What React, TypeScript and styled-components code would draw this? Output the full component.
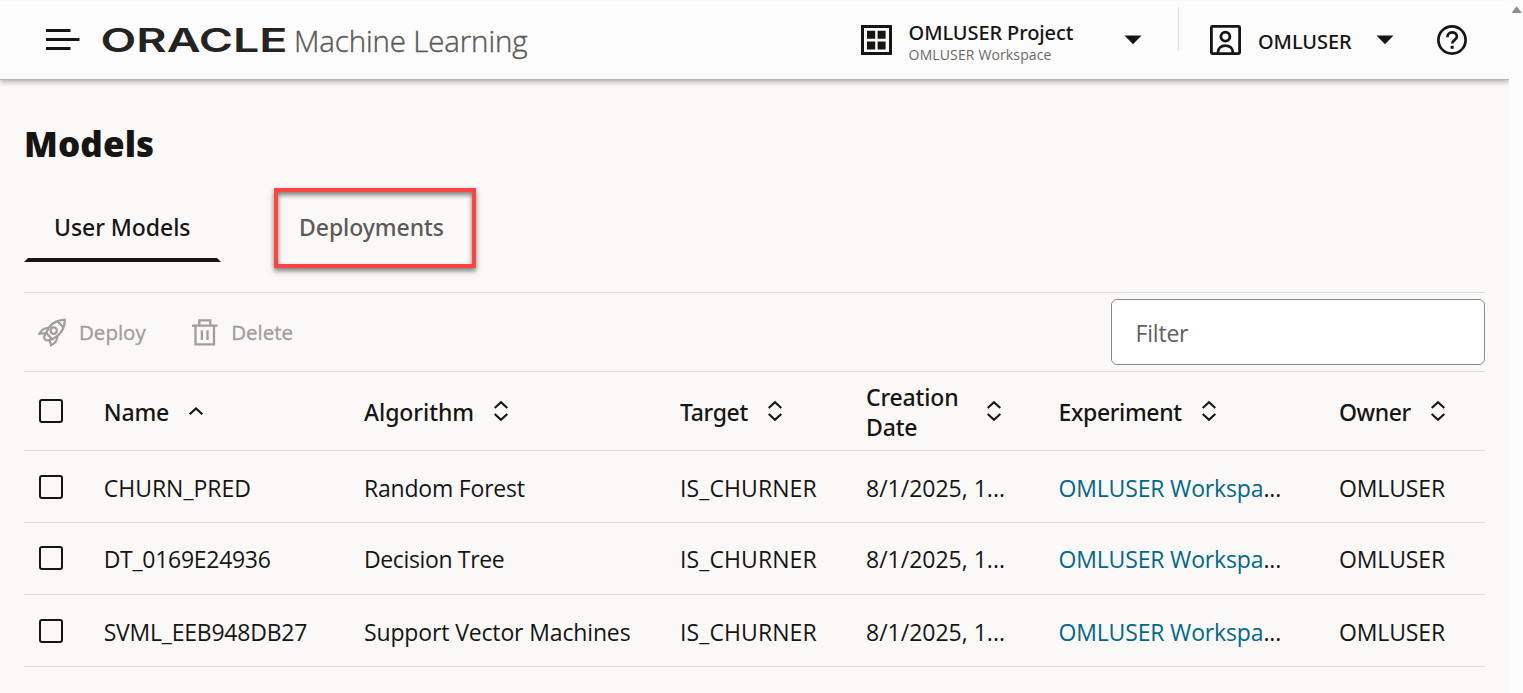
import React from 'react';
import styled, { createGlobalStyle } from 'styled-components';

const ink = '#161513';
const rule = '#dfdddb';

const GlobalStyle = createGlobalStyle`
  * { box-sizing: border-box; }
  body {
    margin: 0;
    background: #fbf9f8;
    color: ${ink};
    font-family: 'Open Sans', 'Noto Sans', sans-serif;
    overflow: hidden;
  }
`;

const Page = styled.div`
  display: flex;
  width: 100%;
  height: 693px;
`;

const Content = styled.div`
  flex: 1;
  min-width: 0;
`;

const ScrollTrack = styled.div`
  width: 14px;
  padding: 6px 0 0 3px;
  background: #fcfcfc;
  line-height: 0;
`;

const Header = styled.header`
  display: flex;
  align-items: center;
  height: 80px;
  padding: 0 42px 1px 46px;
  background: #fcfcfc;
  border-top: 1px solid #fff6f2;
  border-bottom: 1px solid #b1b3bf;
  box-shadow: 0 2px 5px rgba(0, 0, 0, 0.3);
  clip-path: inset(0 0 -12px 0);

  svg { flex: none; }
`;

const Logo = styled.svg`
  margin-left: 22px;
  overflow: visible;
`;

const Product = styled.span`
  margin: 2px 0 0 6px;
  font-size: 29.5px;
  font-weight: 300;
  line-height: 40px;
  letter-spacing: -0.15px;
  color: #5b5956;
  -webkit-text-stroke: 0.4px #5b5956;
  white-space: nowrap;
`;

const ProjectMenu = styled.div`
  display: flex;
  align-items: center;
  margin-left: auto;
`;

const ProjectText = styled.div`
  display: flex;
  flex-direction: column;
  gap: 1px;
  width: 165px;
  margin: 5px 50px 0 17px;
  white-space: nowrap;
`;

const ProjectName = styled.span`
  font: 500 20px/24px 'Noto Sans', sans-serif;
  letter-spacing: -0.1px;
`;

const WorkspaceName = styled.span`
  font-size: 14px;
  line-height: 18px;
  letter-spacing: 0.13px;
  color: #6b6966;
`;

const HeaderDivider = styled.div`
  width: 1px;
  height: 44px;
  margin: -22px 31px 0 36.4px;
  background: #dededd;
`;

const UserName = styled.span`
  width: 95px;
  margin: 4px 23px 0 17px;
  font: 500 20px/24px 'Noto Sans', sans-serif;
  letter-spacing: -0.07px;
`;

const HelpSlot = styled.div`
  margin-left: 43px;
  line-height: 0;
`;

const Main = styled.main`
  padding: 42px 24px 0;
`;

const Title = styled.h1`
  margin: 0;
  font: 900 35px/44px 'Noto Sans', sans-serif;
  letter-spacing: 0.1px;
`;

const Tabs = styled.nav`
  display: flex;
  align-items: flex-start;
  height: 104px;
  margin-top: 22px;
  gap: 53px;
`;

const Tab = styled.div<{ $selected?: boolean }>`
  display: flex;
  flex-direction: column;
  justify-content: space-between;
  width: ${(p) => (p.$selected ? '197px' : '202px')};
  height: ${(p) => (p.$selected ? '74px' : '80px')};
  color: ${(p) => (p.$selected ? ink : '#5c5a58')};
  font: 500 23px/30px 'Noto Sans', sans-serif;
  letter-spacing: -0.06px;
  padding-top: ${(p) => (p.$selected ? '24px' : '20px')};
  padding-left: ${(p) => (p.$selected ? '0' : '21px')};
`;

const HighlightedTab = styled(Tab)`
  border: 4px solid #ff4444;
  box-shadow: 0 3px 5px rgba(0, 0, 0, 0.5), inset 0 3px 5px rgba(0, 0, 0, 0.5);
`;

const TabLabel = styled.span`
  padding-left: 30px;
`;

const TabUnderline = styled.div`
  height: 4px;
  background: ${ink};
  clip-path: polygon(4px 0, calc(100% - 4px) 0, 100% 100%, 0 100%);
`;

const Toolbar = styled.div`
  display: flex;
  align-items: center;
  height: 80px;
  padding-left: 14px;
  border-top: 1px solid ${rule};
  border-bottom: 1px solid ${rule};
`;

const ToolButton = styled.div`
  display: flex;
  align-items: center;
  margin-right: 46px;
  color: #a09e9c;
  font-size: 20.5px;
  line-height: 28px;
`;

const ToolLabel = styled.span<{ $gap: number }>`
  margin: 0 0 0 ${(p) => p.$gap}px;
  -webkit-text-stroke: 0.35px currentColor;
`;

const Filter = styled.div`
  width: 374px;
  height: 66px;
  margin-left: auto;
  padding: 1px 0 0 23.6px;
  border: 1px solid #8b8987;
  border-radius: 6px;
  background: #fff;
  color: #625f5c;
  font-size: 23px;
  line-height: 64px;
  letter-spacing: -0.22px;
`;

const Row = styled.div<{ $head?: boolean }>`
  display: grid;
  grid-template-columns: 79.7px 260.3px 316px 186px 192.5px 280.5px 1fr;
  align-items: center;
  height: ${(p) => (p.$head ? '79px' : '72px')};
  border-bottom: 1px solid ${rule};
`;

const Cell = styled.div<{ $spacing?: number; $drop?: number }>`
  padding-top: ${(p) => p.$drop ?? 3}px;
  font-size: 23px;
  line-height: 30px;
  letter-spacing: ${(p) => p.$spacing ?? 0}px;
  white-space: nowrap;
`;

const ExperimentLink = styled.a`
  color: #00688c;
`;

const HeadCell = styled.div`
  display: flex;
  align-items: center;
`;

const HeadLabel = styled.span<{ $spacing?: number; $width: number }>`
  width: ${(p) => p.$width}px;
  margin-top: 2px;
  font: 500 23px/30px 'Noto Sans', sans-serif;
  letter-spacing: ${(p) => p.$spacing ?? 0}px;
`;

const CheckBox = styled.div<{ $raised?: boolean }>`
  width: 24px;
  height: 24px;
  margin: ${(p) => (p.$raised ? '-1px' : '1px')} 0 0 15px;
  border: 2px solid ${ink};
  border-radius: 3px;
`;

const Caret = () => (
  <svg width="18" height="10" viewBox="0 0 18 10">
    <path d="M0.5 0.5h17L9 9.3z" fill={ink} />
  </svg>
);

const SortIcon = ({ both }: { both?: boolean }) => (
  <svg width="16" height="22" viewBox="0 0 16 22" fill="none" stroke={ink} strokeWidth="2.1">
    {both ? <path d="M1.7 8.1L8 2.3l6.3 5.8M1.7 13.9L8 19.7l6.3-5.8" /> : <path d="M1.7 14.2L8 8.4l6.3 5.8" />}
  </svg>
);

const columns = [
  { label: 'Name', width: 84, spacing: -0.15, both: false },
  { label: 'Algorithm', width: 129, spacing: -0.05, both: true },
  { label: 'Target', width: 86.8, spacing: -0.35, both: true },
  { label: 'Creation Date', width: 119.8, spacing: -0.15, both: true },
  { label: 'Experiment', width: 142.6, spacing: -0.38, both: true },
  { label: 'Owner', width: 90.8, spacing: -0.4, both: true },
];

const models = [
  { name: 'CHURN_PRED', spacing: 0, algorithm: 'Random Forest', algoSpacing: -0.2, drop: 3 },
  { name: 'DT_0169E24936', spacing: -0.28, algorithm: 'Decision Tree', algoSpacing: -0.36, drop: 1 },
  { name: 'SVML_EEB948DB27', spacing: -0.22, algorithm: 'Support Vector Machines', algoSpacing: -0.14, drop: 3 },
];

export default function App() {
  return (
    <>
      <GlobalStyle />
      <Page>
        <Content>
          <Header>
            <svg width="34" height="22" viewBox="0 0 34 22" fill={ink}>
              <path d="M0 0h24.5v3H0zM0 9h33.5v3H0zM0 18h24.5v3H0z" />
            </svg>
            <Logo width="186" height="24" viewBox="0 0 186 24">
              <text
                x="-1.5"
                y="24"
                textLength="187"
                lengthAdjust="spacingAndGlyphs"
                fontFamily="Inter, sans-serif"
                fontSize="33"
                fontWeight="600"
                fill="#242322"
              >
                ORACLE
              </text>
            </Logo>
            <Product>Machine Learning</Product>
            <ProjectMenu>
              <svg width="31" height="30" viewBox="0 0 31 30">
                <path d="M1.5 1.5h28v27h-28z" fill="none" stroke={ink} strokeWidth="3" />
                <path d="M6 5.7h8.2v8H6zM16.6 5.7h8v8h-8zM6 16.4h8.2v8H6zM16.6 16.4h8v8h-8z" fill={ink} />
              </svg>
              <ProjectText>
                <ProjectName>OMLUSER Project</ProjectName>
                <WorkspaceName>OMLUSER Workspace</WorkspaceName>
              </ProjectText>
              <Caret />
            </ProjectMenu>
            <HeaderDivider />
            <svg width="31" height="30" viewBox="0 0 31 30" fill="none" stroke={ink} strokeWidth="2.8">
              <rect x="1.4" y="1.4" width="28.2" height="27.2" rx="1" />
              <circle cx="15.4" cy="11.6" r="4.5" />
              <path d="M7.8 28.3c0-5 3.4-7.6 7.6-7.6s7.6 2.6 7.6 7.6" />
            </svg>
            <UserName>OMLUSER</UserName>
            <Caret />
            <HelpSlot>
              <svg width="30" height="30" viewBox="0 0 30 30" fill="none" stroke={ink} strokeWidth="2.7">
                <circle cx="15" cy="15" r="13.6" />
                <path d="M10.4 12.2c0-3 2-4.8 4.7-4.8 2.8 0 4.8 1.7 4.8 4.2 0 3.1-4.7 3.4-4.7 7" />
                <path d="M13.6 20.8h3.1v3h-3.1z" fill={ink} stroke="none" />
              </svg>
            </HelpSlot>
          </Header>
          <Main>
            <Title>Models</Title>
            <Tabs>
              <Tab $selected>
                <TabLabel>User Models</TabLabel>
                <TabUnderline />
              </Tab>
              <HighlightedTab>Deployments</HighlightedTab>
            </Tabs>
            <Toolbar>
              <ToolButton>
                <svg width="28" height="29" viewBox="0 0 28 29" fill="none" stroke="currentColor" strokeWidth="2.2">
                  <path d="M8.2 14.8C11 7.5 17.5 2.2 26.8 1.7C26.9 10.5 21.5 17.5 14.2 21.3z" />
                  <circle cx="15.7" cy="12.6" r="3.2" />
                  <path d="M19.3 3.2l6.2 6.2M10.5 9.8C6.5 9.8 3.2 12 1.3 15.8l6.8-.8M19.3 17.9c.2 4-2 7.2-6.2 9.3l-1.8-5.2M8.2 14.8l-2 3.6c-.5 2.2 1.4 4.5 4 4l3.6-1.3" />
                </svg>
                <ToolLabel $gap={13}>Deploy</ToolLabel>
              </ToolButton>
              <ToolButton>
                <svg width="26" height="27" viewBox="0 0 26 27" fill="none" stroke="currentColor" strokeWidth="2.3">
                  <path d="M0 6.6h25.5M7.3 6.6V1.3h11v5.3M3.5 6.6v18.7h18.5V6.6M9.9 11.3v9.8M15.5 11.3v9.8" />
                </svg>
                <ToolLabel $gap={13.5}>Delete</ToolLabel>
              </ToolButton>
              <Filter>Filter</Filter>
            </Toolbar>
            <Row $head>
              <CheckBox $raised />
              {columns.map((c) => (
                <HeadCell key={c.label}>
                  <HeadLabel $width={c.width} $spacing={c.spacing}>
                    {c.label}
                  </HeadLabel>
                  <SortIcon both={c.both} />
                </HeadCell>
              ))}
            </Row>
            {models.map((m) => (
              <Row key={m.name}>
                <CheckBox $raised={m.drop === 1} />
                <Cell $drop={m.drop} $spacing={m.spacing}>{m.name}</Cell>
                <Cell $drop={m.drop} $spacing={m.algoSpacing}>{m.algorithm}</Cell>
                <Cell $drop={m.drop} $spacing={0.1}>IS_CHURNER</Cell>
                <Cell $drop={m.drop} $spacing={0}>8/1/2025, 1...</Cell>
                <Cell $drop={m.drop} $spacing={-0.16}>
                  <ExperimentLink>OMLUSER Workspa</ExperimentLink>...
                </Cell>
                <Cell $drop={m.drop} $spacing={-0.12}>OMLUSER</Cell>
              </Row>
            ))}
          </Main>
        </Content>
        <ScrollTrack>
          <svg width="10" height="7" viewBox="0 0 10 7">
            <path d="M4.5 0.3L9.3 6.2q.1.8-.6.8H.6q-.7 0-.5-.8z" fill="#8b8b8b" />
          </svg>
        </ScrollTrack>
      </Page>
    </>
  );
}
